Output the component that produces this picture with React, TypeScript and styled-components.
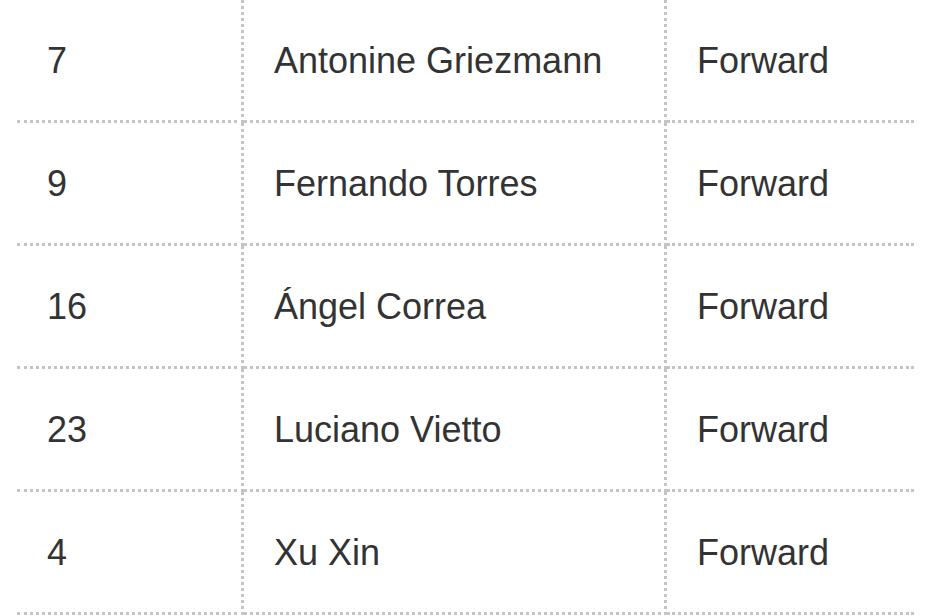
import React from "react";
import styled, { createGlobalStyle } from "styled-components";

const Global = createGlobalStyle`
  html, body { margin: 0; padding: 0; background: #ffffff; }
  body { font-family: "Liberation Sans", Arial, sans-serif; overflow: hidden; }
`;

const Page = styled.div`
  padding: 0 0 0 17px;
`;

const Table = styled.div`
  display: grid;
  grid-template-columns: 227px 423px 247px;
  width: 897px;
`;

const Cell = styled.div<{ $divider?: boolean }>`
  box-sizing: border-box;
  height: 123px;
  display: flex;
  align-items: center;
  padding: 2px 0 0 30px;
  border-bottom: 3px dotted #c4c4c4;
  border-right: ${(p) => (p.$divider ? "3px dotted #c4c4c4" : "none")};
  font-size: 36px;
  color: #333333;
  white-space: nowrap;
`;

const players = [
  { no: "7", name: "Antonine Griezmann", pos: "Forward" },
  { no: "9", name: "Fernando Torres", pos: "Forward" },
  { no: "16", name: "Ángel Correa", pos: "Forward" },
  { no: "23", name: "Luciano Vietto", pos: "Forward" },
  { no: "4", name: "Xu Xin", pos: "Forward" },
];

export default function App() {
  return (
    <Page>
      <Global />
      <Table>
        {players.map((p) => (
          <React.Fragment key={p.no}>
            <Cell $divider>{p.no}</Cell>
            <Cell $divider>{p.name}</Cell>
            <Cell>{p.pos}</Cell>
          </React.Fragment>
        ))}
      </Table>
    </Page>
  );
}
